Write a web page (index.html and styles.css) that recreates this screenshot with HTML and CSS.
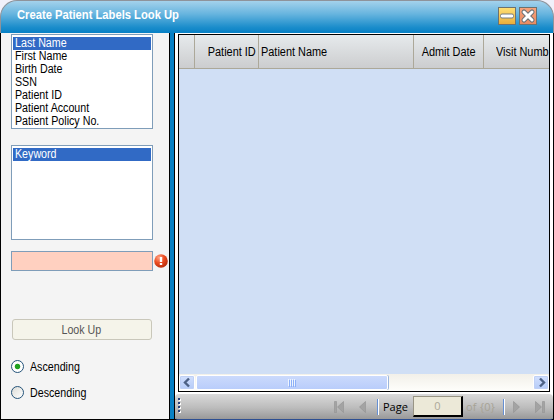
FILE: index.html
```html
<!DOCTYPE html>
<html lang="en">
<head>
<meta charset="utf-8">
<title>Create Patient Labels Look Up</title>
<link rel="stylesheet" href="styles.css">
</head>
<body>
<div class="window">
  <header class="titlebar">
    <h1>Create Patient Labels Look Up</h1>
    <button class="win-btn minimize" aria-label="Minimize"><svg width="18" height="18" viewBox="0 0 18 18"><rect x="2.5" y="7" width="13" height="4" rx="1.5" fill="#fff" stroke="#777d80"/></svg></button>
    <button class="win-btn close" aria-label="Close"><svg width="18" height="18" viewBox="0 0 18 18"><path d="M5 5l8 8M13 5l-8 8" stroke="#6b7175" stroke-width="5" stroke-linecap="round"/><path d="M5 5l8 8M13 5l-8 8" stroke="#fff" stroke-width="3" stroke-linecap="round"/></svg></button>
  </header>
  <main class="content">
    <aside class="search">
      <ul class="list fields">
        <li class="selected"><span>Last Name</span></li>
        <li><span>First Name</span></li>
        <li><span>Birth Date</span></li>
        <li><span>SSN</span></li>
        <li><span>Patient ID</span></li>
        <li><span>Patient Account</span></li>
        <li><span>Patient Policy No.</span></li>
      </ul>
      <ul class="list operators"><li class="selected"><span>Keyword</span></li></ul>
      <div class="entry">
        <div class="input"></div>
        <svg width="14" height="14" viewBox="0 0 14 14">
          <defs><radialGradient id="err" cx=".35" cy=".25" r=".8"><stop offset="0" stop-color="#ffa183"/><stop offset=".5" stop-color="#ec4b20"/><stop offset="1" stop-color="#b52c0b"/></radialGradient></defs>
          <circle cx="7" cy="7" r="6.8" fill="url(#err)"/><path d="M5.8 3h2.4v5H5.8zM5.8 9h2.4v2H5.8z" fill="#fff"/>
        </svg>
      </div>
      <button class="lookup"><span>Look Up</span></button>
      <label class="radio"><i class="dot on"></i><span>Ascending</span></label>
      <label class="radio"><i class="dot"></i><span>Descending</span></label>
    </aside>
    <div class="splitter"></div>
    <section class="results">
      <div class="grid">
        <div class="head">
          <div class="cell"></div>
          <div class="cell right"><span>Patient ID</span></div>
          <div class="cell"><span>Patient Name</span></div>
          <div class="cell center"><span>Admit Date</span></div>
          <div class="cell visit"><span>Visit Numb</span></div>
        </div>
        <div class="rows"></div>
        <div class="scroll">
          <div class="arrow"><svg width="13" height="13" viewBox="0 0 13 13"><path d="M8 2.5l-4 4 4 4" fill="none" stroke="#4d6185" stroke-width="2.4"/></svg></div>
          <div class="thumb"><svg width="9" height="8" viewBox="0 0 9 8" shape-rendering="crispEdges"><path d="M.5 0v7M2.5 0v7M4.5 0v7M6.5 0v7" stroke="#eef4fe"/><path d="M1.5 1v7M3.5 1v7M5.5 1v7M7.5 1v7" stroke="#8cb0f8"/></svg></div>
          <div class="track"></div>
          <div class="arrow"><svg width="13" height="13" viewBox="0 0 13 13"><path d="M5 2.5l4 4-4 4" fill="none" stroke="#4d6185" stroke-width="2.4"/></svg></div>
        </div>
      </div>
      <div class="pager">
        <svg class="grip" width="4" height="16" viewBox="0 0 4 16" shape-rendering="crispEdges"><path d="M1 1h2v2H1zM1 5h2v2H1zM1 9h2v2H1zM1 13h2v2H1z" fill="#fff"/><path d="M0 0h2v2H0zM0 4h2v2H0zM0 8h2v2H0zM0 12h2v2H0z" fill="#27417c"/></svg>
        <svg class="nav first" width="10" height="12" viewBox="0 0 10 12"><path d="M.5.5h2v11h-2zM9.5.5v11L3.5 6z" fill="#a3a3a3" stroke="#929292" stroke-width=".6"/></svg>
        <svg class="nav prev" width="7" height="12" viewBox="0 0 7 12"><path d="M6.5.5v11L.5 6z" fill="#a3a3a3" stroke="#929292" stroke-width=".6"/></svg>
        <i class="sep"></i>
        <span class="page">Page</span>
        <div class="number">0</div>
        <span class="total">of {0}</span>
        <i class="sep after"></i>
        <svg class="nav next" width="7" height="12" viewBox="0 0 7 12"><path d="M.5.5v11l6-5.500z" fill="#a3a3a3" stroke="#929292" stroke-width=".6"/></svg>
        <svg class="nav last" width="10" height="12" viewBox="0 0 10 12"><path d="M.5.5v11l6-5.500zM7.500.5h2v11h-2z" fill="#a3a3a3" stroke="#929292" stroke-width=".6"/></svg>
      </div>
    </section>
  </main>
</div>
</body>
</html>
```
FILE: styles.css
```css
* { box-sizing: border-box; }
body { margin: 0; width: 554px; height: 420px; overflow: hidden; background: #f0f0fa; font: 12px/13px "Liberation Sans", sans-serif; color: #000; }
.window { width: 554px; height: 420px; display: flex; flex-direction: column; }
.titlebar { height: 33px; flex: none; display: flex; align-items: center; padding: 0 16px 2px 16px; border: 1px solid #8e939b; border-bottom: 0; border-radius: 17px 17px 0 0; background: linear-gradient(#a4d2ec, #68b5df 40%, #1b8dcb 82%, #0780c5); }
h1 { margin: 0 auto 2px 0; color: #fff; font-size: 12px; line-height: 14px; font-weight: bold; white-space: nowrap; transform: scaleX(.934); transform-origin: left; }
.win-btn { width: 18px; height: 18px; padding: 0; border: 1px solid #6e726f; margin-left: 3px; }
.win-btn svg { display: block; margin: -1px; }
.minimize { background: linear-gradient(#ffdf73, #eaae3b); }
.close { background: linear-gradient(#f8a27b, #e98b62); }
.content { flex: 1; min-height: 0; display: flex; border-left: 1px solid #000; border-right: 1px solid #000; border-bottom: 1px solid #000; }
.search { width: 168px; background: #f4f4f4; padding: 1px 0 0 10px; }
ul { list-style: none; margin: 0; padding: 2px 1px; width: 142px; border: 1px solid #7f9db9; background: #fff; }
.fields { height: 95px; }
.operators { height: 95px; margin-top: 16px; }
li { height: 13px; padding-left: 2px; }
li.selected { background: #316ac5; color: #fff; }
li span, .cell span, .radio span, .lookup span { display: inline-block; white-space: nowrap; transform: scaleX(.89); transform-origin: left; }
.entry { display: flex; align-items: center; margin-top: 11px; gap: 1px; }
.input { width: 142px; height: 20px; border: 1px solid #7f9db9; background: #ffd0c0; }
.lookup { display: flex; justify-content: center; align-items: center; width: 140px; height: 21px; margin: 48px 0 20px 1px; padding: 2px 2px 0 0; border: 1px solid #c9c7ba; border-radius: 3px; background: #f5f4ea; color: #555; font: 12px/13px "Liberation Sans", sans-serif; }
.lookup span { transform-origin: center; }
.radio { display: flex; align-items: center; height: 13px; margin-bottom: 13px; }
.radio span { padding-top: 2px; }
.dot { width: 13px; height: 13px; border: 1px solid #245379; border-radius: 50%; background: linear-gradient(135deg, #dcdcd7, #fff); margin-right: 6px; flex: none; }
.dot.on { background: radial-gradient(circle, #21a121 0 2.3px, #fff 3.200px); }
.splitter { width: 6px; background: #0780c5; border: solid #000; border-width: 0 1px; }
.results { flex: 1; min-width: 0; background: #fff; }
.grid { width: 372px; height: 358px; margin: 1px 0 0 3px; border: 1px solid #000; display: flex; flex-direction: column; background: #d0dff5; }
.head { height: 34px; display: grid; grid-template-columns: 16px 64px 155px 70px 65px; background: linear-gradient(#e6eaec, #cccdcf); border-bottom: 1px solid #aca899; }
.cell { border-right: 1px solid #aca899; display: flex; align-items: center; padding: 2px 0 0 2px; overflow: hidden; }
.cell:last-child { border-right: 0; }
.cell span { transform: scaleX(.91); }
.cell.right { justify-content: flex-end; padding-right: 2px; }
.right span { transform-origin: right; }
.cell.center { justify-content: center; padding: 2px 0 0; }
.center span { transform-origin: center; }
.cell.visit { padding-left: 12px; }
.rows { flex: 1; }
.scroll { height: 17px; display: flex; gap: 1px; background: linear-gradient(#f2f0e9, #fefefb); padding-top: 1px; }
.arrow { width: 16px; height: 15px; border: 1px solid #fff; border-radius: 2px; background: linear-gradient(#d2e0fd, #b5cbf8); box-shadow: inset 0 0 0 1px #bfd0f5; display: grid; place-items: center; }
.thumb { width: 192px; height: 15px; border: 1px solid #fff; border-radius: 2px; background: linear-gradient(#cbdafc, #b9cdfb); box-shadow: 1px 0 #9db6dc; display: grid; place-items: center; }
.track { flex: 1; }
.pager { height: 26px; margin-top: 2px; border-radius: 4px 4px 3px 3px; border-bottom: 1px solid #2d4f92; background: linear-gradient(#dadada, #bcbcbc 55%, #999); display: flex; align-items: center; padding-left: 3px; font: 11px/13px "Open Sans", sans-serif; }
.grip { margin-bottom: 2px; }
.first { margin-left: 152px; }
.prev { margin-left: 15px; }
.sep { width: 2px; height: 16px; margin-left: 11px; border-left: 1px solid #6690d3; border-right: 1px solid #fff; }
.page { width: 30px; margin-left: 4px; }
.number { width: 50px; height: 21px; border: 1px solid #999585; border-right: 2px solid #000; border-bottom: 2px solid #000; background: #ece9d8; color: #aca899; text-align: center; line-height: 18px; }
.total { width: 30px; margin-left: 3px; color: #a7a395; white-space: nowrap; letter-spacing: .25px; }
.after { margin-left: 7px; }
.next { margin-left: 8px; }
.last { margin-left: 15px; }
```
